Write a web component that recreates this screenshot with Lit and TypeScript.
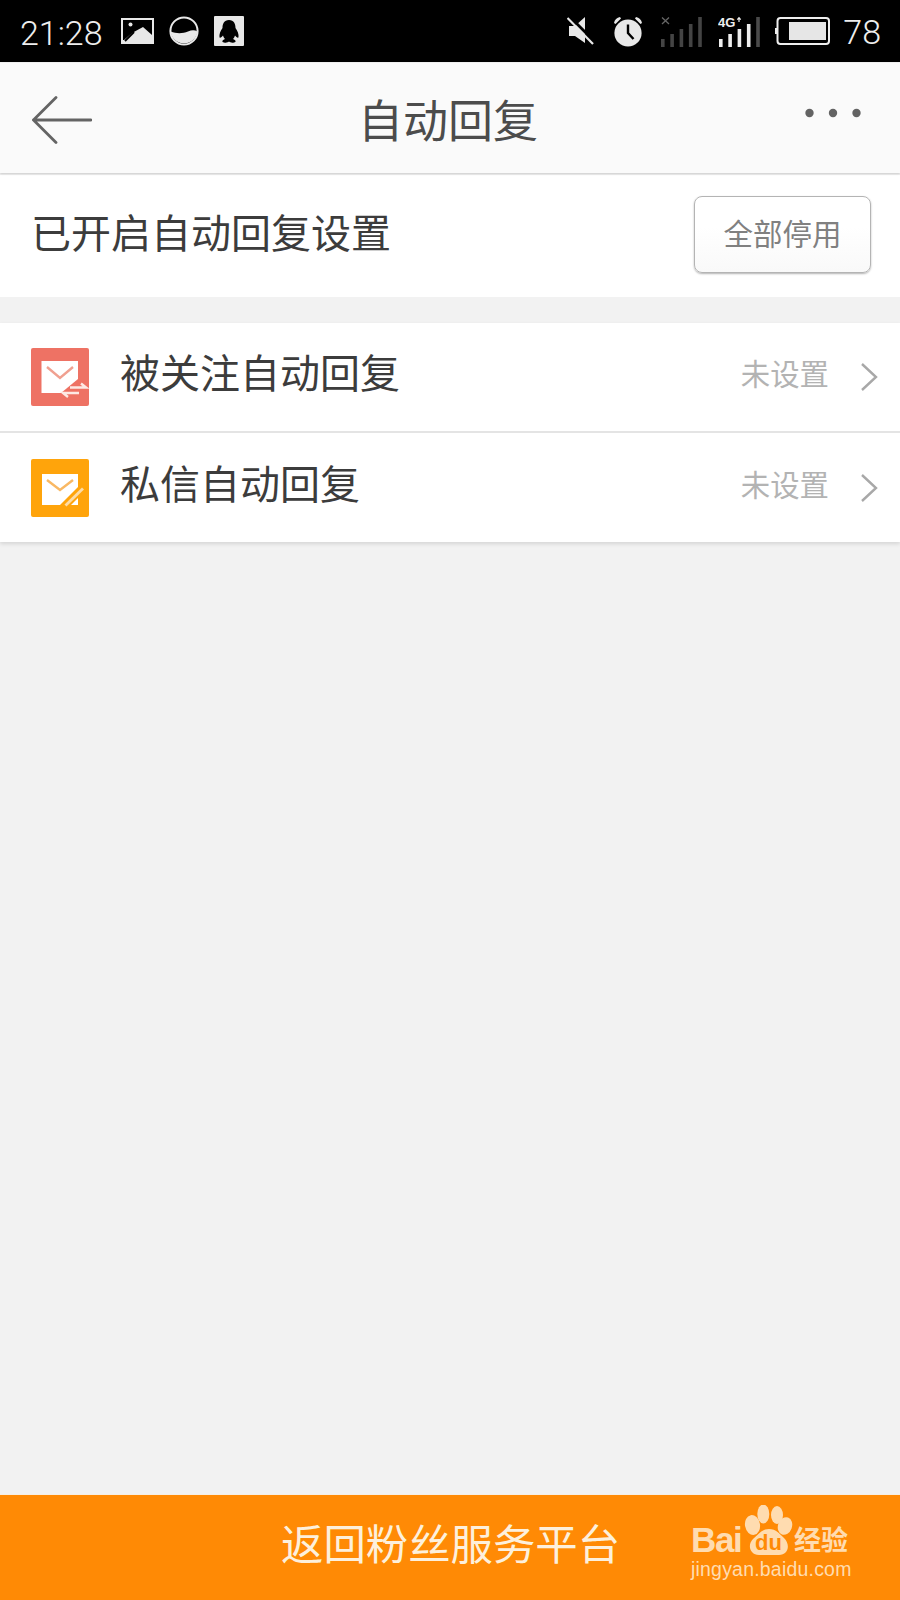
import { LitElement, html, css, svg } from 'lit';
import { customElement } from 'lit/decorators.js';

const rows = [
  { label: '被关注自动回复', status: '未设置', kind: 'follow' },
  { label: '私信自动回复', status: '未设置', kind: 'message' },
];

// five signal bars standing on the bottom of a 42x31 box
const bars = (colors: string[]) => {
  const heights = [8, 13, 18, 23, 30];
  return heights.map(
    (h, i) => svg`<rect x=${1 + i * 9.3} y=${31 - h} width="3.6" height=${h} fill=${colors[i]}></rect>`
  );
};

@customElement('app-root')
export class AppRoot extends LitElement {
  static styles = css`
    :host {
      display: block;
      width: 900px;
      height: 1600px;
      background: #f2f2f2;
      font-family: 'Noto Sans CJK SC', 'Liberation Sans', sans-serif;
    }
    .page {
      height: 1600px;
      display: flex;
      flex-direction: column;
    }

    .status {
      height: 62px;
      flex: none;
      background: #000;
      color: #eee;
      display: flex;
      align-items: center;
      padding: 0 19px 0 20px;
      font-family: Roboto, 'Liberation Sans', sans-serif;
      font-size: 34px;
      font-weight: 300;
    }
    .status svg { display: block; flex: none; }
    .status .time { width: 101px; margin-top: 3px; }
    .status .left { display: flex; align-items: center; gap: 15px; }
    .status .right { margin-left: auto; display: flex; align-items: center; }
    .status .level { margin-left: 13px; margin-top: 1px; }
    .status .alarm { margin-left: 19px; }
    .status .sim1 { margin-left: 17px; }
    .status .sim2 { margin-left: 16px; }
    .status .cell { margin-left: 15px; }

    .nav {
      height: 110px;
      flex: none;
      margin-top: 1px;
      background: #fafafa;
      display: flex;
      align-items: center;
      justify-content: space-between;
      padding: 0 39px 0 32px;
      box-shadow: 0 1px 2px rgba(0, 0, 0, 0.16);
      position: relative;
    }
    .nav .title {
      position: absolute;
      left: 0;
      right: 4px;
      text-align: center;
      font-size: 45px;
      color: #4c4c4c;
    }
    .nav .back-arrow { display: block; margin-top: 4px; }
    .nav .more { display: block; margin-top: -10px; }

    .switch {
      margin-top: 2px;
      height: 122px;
      flex: none;
      background: #fff;
      display: flex;
      align-items: center;
      justify-content: space-between;
      padding: 0 29px 0 31px;
      font-size: 40px;
      color: #3c3c3c;
    }
    .switch .caption { margin-top: -11px; }
    .stop {
      width: 177px;
      height: 77px;
      margin-top: -4px;
      padding-bottom: 5px;
      box-sizing: border-box;
      border-radius: 8px;
      border: 1px solid #b4b4b4;
      box-shadow: 0 1px 2px rgba(0, 0, 0, 0.3);
      background: linear-gradient(#fff 40%, #f9f9f9);
      display: flex;
      align-items: center;
      justify-content: center;
      font-size: 29.5px;
      color: #808080;
    }

    .list {
      margin-top: 26px;
      flex: none;
      display: flex;
      flex-direction: column;
      gap: 2px;
      background: #e4e4e4;
      box-shadow: 0 2px 4px rgba(0, 0, 0, 0.12);
    }
    .row {
      height: 108px;
      background: #fff;
      display: flex;
      align-items: center;
      padding: 0 22px 0 31px;
    }
    .row:last-child { height: 109px; }
    .row .mark { flex: none; display: block; }
    .row .label {
      margin-left: 31px;
      font-size: 40px;
      color: #3c3c3c;
      margin-top: -12px;
    }
    .row .state {
      margin-left: auto;
      font-size: 29.4px;
      color: #b3b3b3;
      margin-top: -10px;
    }
    .row .arrow { flex: none; display: block; margin-left: 31px; }

    .space { flex: 1; }

    .footer {
      height: 105px;
      flex: none;
      background: #ff8a05;
      box-shadow: 0 -1px 0 #f6efe4;
      position: relative;
      display: flex;
      align-items: center;
      padding-left: 281px;
      font-size: 42.4px;
      color: #fdf0dc;
    }
    .footer .back { margin-top: -12px; }
    .brand {
      position: absolute;
      left: 690px;
      top: 10px;
      width: 170px;
      height: 90px;
      color: #ffdcb0;
    }
    .brand svg { position: absolute; left: 0; top: 0; }
    .brand .bai {
      position: absolute;
      left: 1px;
      top: 17px;
      font: bold 35px 'Liberation Sans', sans-serif;
      line-height: 36px;
      letter-spacing: -1.4px;
    }
    .brand .du {
      position: absolute;
      left: 58px;
      top: 24px;
      width: 41px;
      height: 32px;
      font: bold 22px 'Liberation Sans', sans-serif;
      line-height: 28px;
      text-align: center;
      color: #ff8a05;
    }
    .brand .jy {
      position: absolute;
      left: 104px;
      top: 17px;
      font-size: 27px;
      font-weight: 700;
      line-height: 34px;
      white-space: nowrap;
    }
    .brand .jing {
      position: absolute;
      left: 1px;
      top: 52px;
      font-family: 'Liberation Sans', sans-serif;
      font-size: 19.5px;
      letter-spacing: 0.2px;
      line-height: 24px;
      white-space: nowrap;
    }
  `;

  private statusBar() {
    return html`
      <div class="status">
        <span class="time">21:28</span>
        <div class="left">
          <svg width="33" height="26" viewBox="0 0 33 26">
            <rect width="33" height="26" fill="#e8e8e8"></rect>
            <rect x="2" y="2" width="29" height="20" fill="#000"></rect>
            <path d="M3 22 L11 15 L22 9 L31 17 V22Z" fill="#e8e8e8"></path>
            <path d="M4 23 L13 14" stroke="#000" stroke-width="2"></path>
            <circle cx="9.5" cy="6.5" r="2" fill="#e8e8e8"></circle>
          </svg>
          <svg width="30" height="30" viewBox="0 0 30 30">
            <circle cx="15" cy="15" r="13.6" fill="#000" stroke="#e8e8e8" stroke-width="2"></circle>
            <path d="M1.6 15.5 C8 18 14 17.5 19 15.5 C23 13.8 26 14 28.4 15.5 A13.5 13.5 0 0 1 1.6 15.5Z" fill="#e8e8e8"></path>
          </svg>
          <svg width="30" height="30" viewBox="0 0 30 30">
            <rect width="30" height="30" rx="1" fill="#e8e8e8"></rect>
            <path d="M15 4 C10 4 8.5 8 8.5 12 C6.5 15 5 18 5.5 21.5 C6.5 22 8 21 9 19.5 C9.5 21 10 22 11 23 C8 24 7.5 26 10 26.5 C12 27 14 26.5 15 25.5 C16 26.5 18 27 20 26.5 C22.5 26 22 24 19 23 C20 22 20.5 21 21 19.5 C22 21 23.5 22 24.5 21.5 C25 18 23.5 15 21.5 12 C21.5 8 20 4 15 4Z" fill="#000"></path>
          </svg>
        </div>
        <div class="right">
          <svg width="27" height="28" viewBox="0 0 27 28">
            <path d="M2 9 H8 L18 0 V26 L8 19 H2Z" fill="#e8e8e8"></path>
            <path d="M3 0 L28 25" stroke="#000" stroke-width="3"></path>
            <path d="M0.5 1 L26 27" stroke="#e8e8e8" stroke-width="2.2"></path>
          </svg>
          <svg class="alarm" width="30" height="31" viewBox="0 0 30 31">
            <circle cx="15" cy="17" r="13.6" fill="#e8e8e8"></circle>
            <path d="M15 8.5 V17 L20.5 23" fill="none" stroke="#000" stroke-width="2.4"></path>
            <path d="M1 7 C1.5 4 4 1.5 7 1 L8 2.5 L2.5 8Z M29 7 C28.5 4 26 1.5 23 1 L22 2.5 L27.5 8Z" fill="#e8e8e8"></path>
          </svg>
          <svg class="sim1" width="42" height="31" viewBox="0 0 42 31">
            ${bars(['#444', '#444', '#444', '#444', '#444'])}
            <path d="M2 1.5 L9 8 M9 1.5 L2 8" stroke="#666" stroke-width="1.3"></path>
          </svg>
          <svg class="sim2" width="42" height="31" viewBox="0 0 42 31">
            ${bars(['#eee', '#eee', '#eee', '#eee', '#4a4a4a'])}
            <text x="0" y="11" font-family="Liberation Sans, sans-serif" font-size="13" font-weight="700" fill="#eee">4G</text>
            <path d="M21 6 V2 M19.3 3.6 L21 1.6 L22.7 3.6" fill="none" stroke="#eee" stroke-width="1.2"></path>
          </svg>
          <svg class="cell" width="55" height="28" viewBox="0 0 55 28">
            <rect x="2.5" y="1" width="51.5" height="26" rx="3" fill="none" stroke="#eee" stroke-width="2"></rect>
            <rect x="0" y="11" width="2" height="6" fill="#eee"></rect>
            <rect x="14" y="5" width="37" height="18" fill="#e6e6e6"></rect>
          </svg>
          <span class="level">78</span>
        </div>
      </div>
    `;
  }

  private mark(kind: string) {
    if (kind === 'follow') {
      return html`
        <svg class="mark" width="58" height="58" viewBox="0 0 58 58">
          <rect width="58" height="58" rx="2" fill="#ee7264"></rect>
          <path d="M10.5 13 H47 V31 L30 45 H10.5Z" fill="#fff"></path>
          <path d="M16 19 L29 30 L42 19" fill="none" stroke="#f0a090" stroke-width="2.4"></path>
          <path d="M39 39.5 H55 L50 35.5 M48 45 H32 L37 49" fill="none" stroke="#fde9e4" stroke-width="2.4"></path>
        </svg>
      `;
    }
    return html`
      <svg class="mark" width="58" height="58" viewBox="0 0 58 58">
        <rect width="58" height="58" rx="2" fill="#ffa40b"></rect>
        <path d="M11 15 H47 V28 L29 46 H11Z" fill="#fff"></path>
        <path d="M16 21 L29 31 L42 21" fill="none" stroke="#f9b863" stroke-width="2.4"></path>
        <path d="M34.5 46.5 L52 29.5" fill="none" stroke="#fcdca8" stroke-width="2.8"></path>
        <path d="M40 46 L47 39 V46Z" fill="#fff"></path>
      </svg>
    `;
  }

  private brand() {
    return html`
      <div class="brand">
        <span class="bai">Bai</span>
        <svg width="170" height="60" viewBox="0 0 170 60">
          <ellipse cx="73.3" cy="9" rx="6" ry="9.5" fill="currentColor"></ellipse>
          <ellipse cx="87" cy="10" rx="6" ry="9" fill="currentColor"></ellipse>
          <ellipse cx="62.5" cy="20" rx="7.5" ry="10" fill="currentColor" transform="rotate(-10 62.5 20)"></ellipse>
          <ellipse cx="95" cy="21" rx="7" ry="9" fill="currentColor" transform="rotate(20 95 21)"></ellipse>
          <path d="M79 24 C86 24 90 29 94 33 C101 40 98 50 89 50 H69 C60 50 57 40 63 34 C69 29 72 24 79 24Z" fill="currentColor"></path>
        </svg>
        <span class="du">du</span>
        <span class="jy">经验</span>
        <span class="jing">jingyan.baidu.com</span>
      </div>
    `;
  }

  render() {
    return html`
      <div class="page">
        ${this.statusBar()}
        <div class="nav">
          <svg class="back-arrow" width="60" height="48" viewBox="0 0 60 48">
            <path d="M24 1.5 L1.5 24 L24 46.5 M1.5 24 H59" fill="none" stroke="#646464" stroke-width="2.8" stroke-linecap="round"></path>
          </svg>
          <span class="title">自动回复</span>
          <svg class="more" width="56" height="10" viewBox="0 0 56 10">
            <circle cx="4.5" cy="5" r="4.2" fill="#636363"></circle>
            <circle cx="28" cy="5" r="4.2" fill="#636363"></circle>
            <circle cx="51.5" cy="5" r="4.2" fill="#636363"></circle>
          </svg>
        </div>
        <div class="switch">
          <span class="caption">已开启自动回复设置</span>
          <div class="stop">全部停用</div>
        </div>
        <div class="list">
          ${rows.map(
            (r) => html`
              <div class="row">
                ${this.mark(r.kind)}
                <span class="label">${r.label}</span>
                <span class="state">${r.status}</span>
                <svg class="arrow" width="18" height="28" viewBox="0 0 18 28">
                  <path d="M2 1 L16 14 L2 27" fill="none" stroke="#a8a8a8" stroke-width="2.4"></path>
                </svg>
              </div>
            `
          )}
        </div>
        <div class="space"></div>
        <div class="footer">
          <span class="back">返回粉丝服务平台</span>
          ${this.brand()}
        </div>
      </div>
    `;
  }
}
